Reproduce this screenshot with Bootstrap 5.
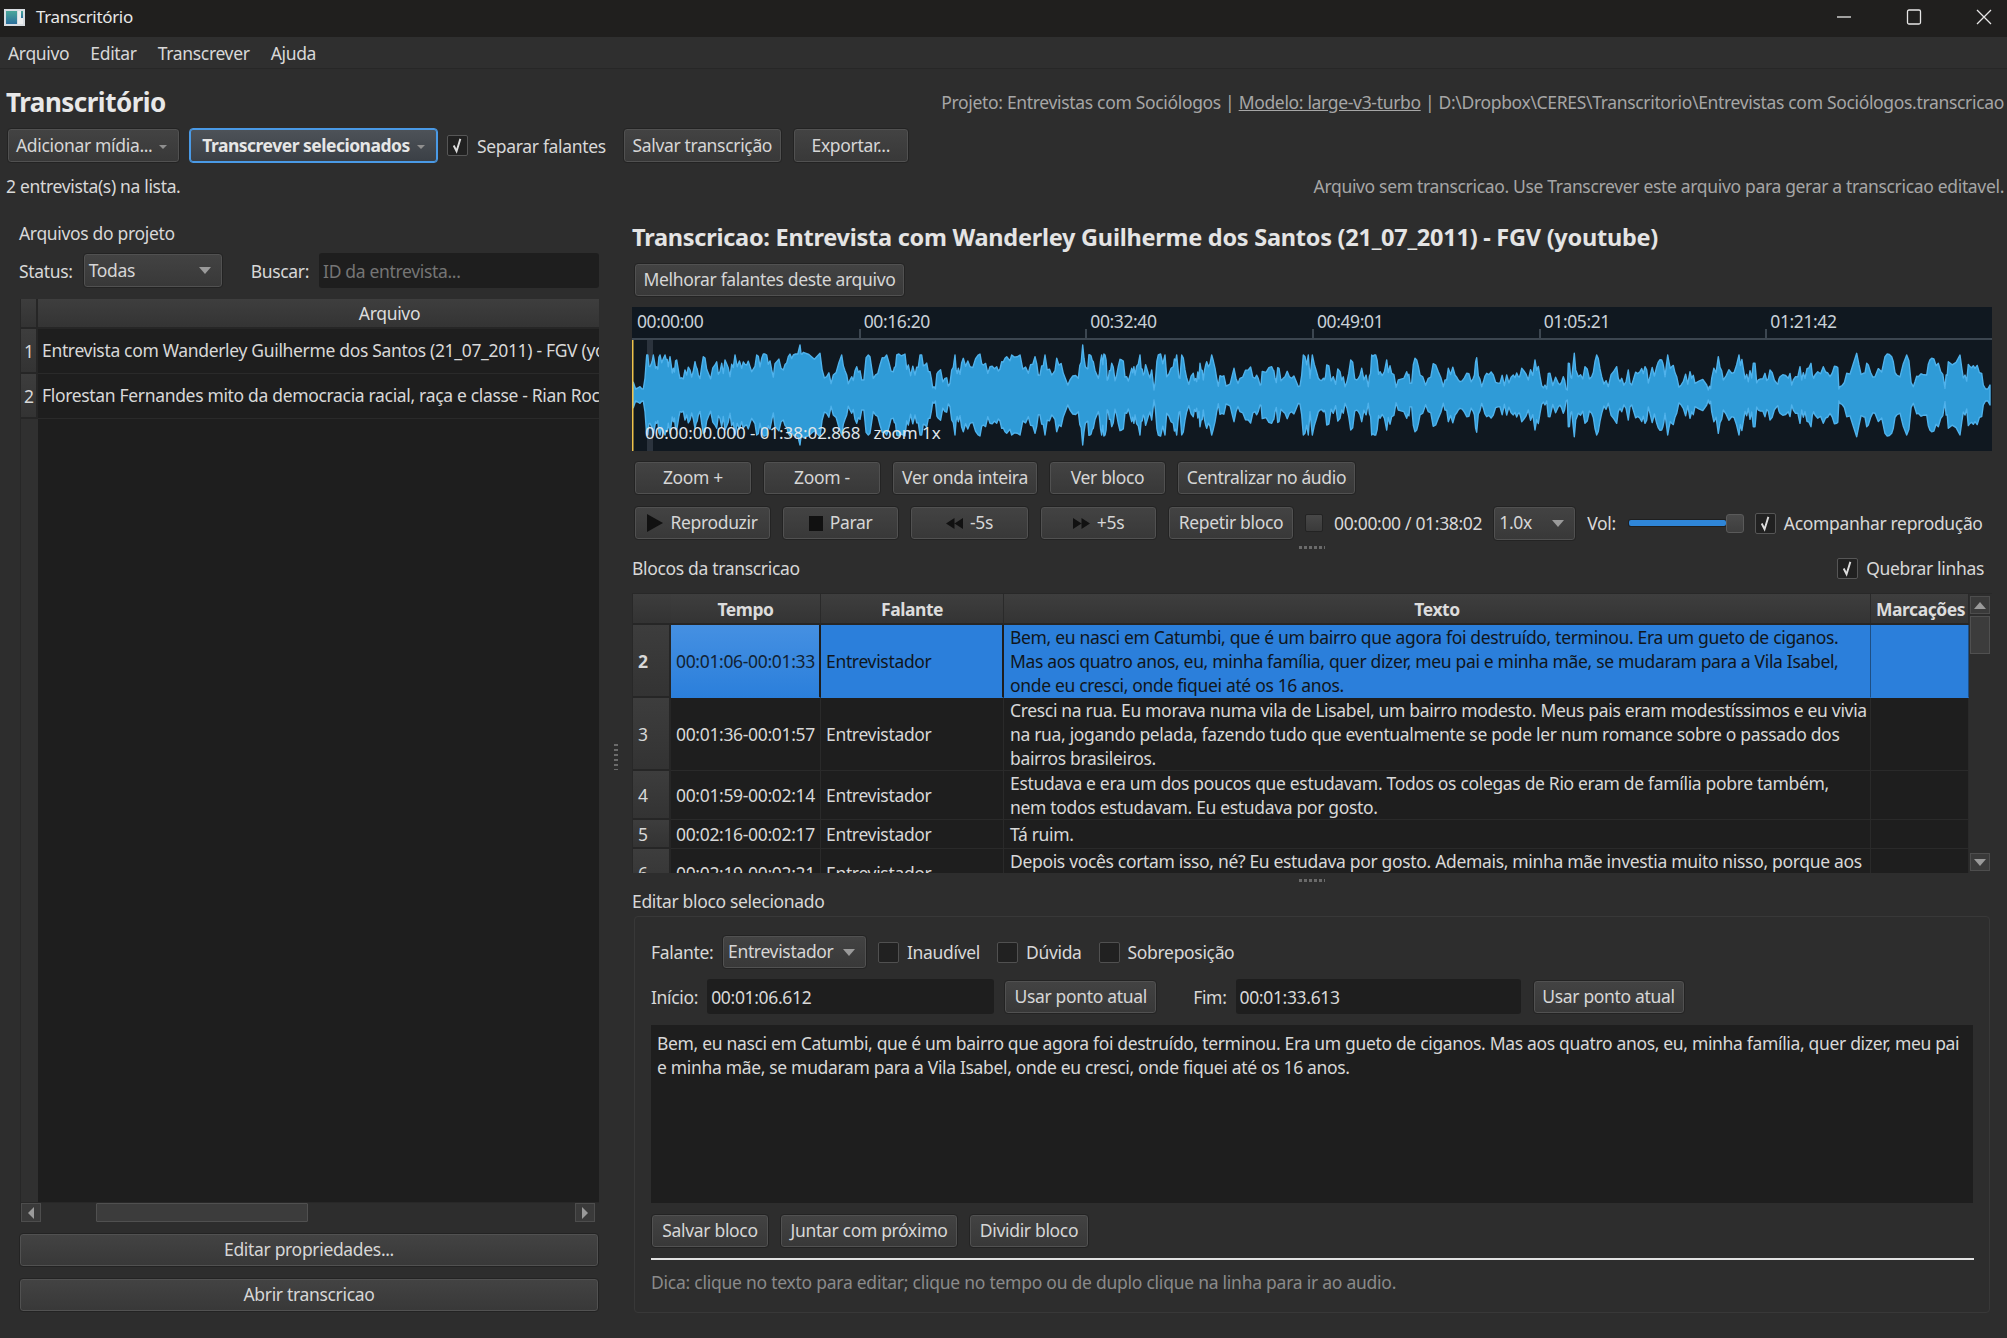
<!DOCTYPE html>
<html lang="pt-BR">
<head>
<meta charset="utf-8">
<title>Transcritório</title>
<link href="https://cdn.jsdelivr.net/npm/bootstrap@5.3.0/dist/css/bootstrap.min.css" rel="stylesheet">
<style>
html,body{margin:0;background:#2d2d2d}
body{font-family:"Noto Sans","Open Sans",sans-serif;font-size:17.5px;line-height:24px;color:#d8d8d8;letter-spacing:-.33px;overflow:hidden}
.app{width:2007px;height:1338px}
.tbar{height:37px;background:#201f1e;color:#e8e8e8;font-size:17px;padding:0 0 3px 4px}
.tbar-name{margin-left:11px}
.wbtn{stroke:#e6e6e6;fill:none;stroke-width:1.3}
.wctl{margin-left:auto;padding-right:15px;gap:54px}
.mbar{height:32px;background:#2f2f2f;border-bottom:1px solid #272727;padding-left:8px;gap:21px}
.mainp{padding:0 3px 25px 6px;min-height:0}
.headrow{margin-top:11px;height:44px;margin-bottom:4px}
.apptitle{font-size:26px;font-weight:700;color:#e8e8e8;letter-spacing:-.5px;margin:0;line-height:32px}
.muted{color:#a6a6a6}
.muted a{color:#a6a6a6}
.toolrow{height:35px;padding-left:1px}
.sep1{margin-left:8px}.sep2{margin-left:2px}
.statrow{height:30px;margin-top:8px}
.qbtn{height:34px;padding:0;border:1px solid #232323;border-radius:4px;box-shadow:inset 0 0 0 1px #515151;background:linear-gradient(#434343,#383838);color:#d6d6d6;font-size:17.5px;letter-spacing:-.33px;line-height:1;white-space:nowrap}
.qbtn:hover{background:linear-gradient(#434343,#383838);color:#d6d6d6;border-color:#232323}
.qbtn.tall{height:35px}
.qbtn.pri{font-weight:700;border-color:#4a9ae6;box-shadow:inset 0 0 0 1px #4a9ae6;background:linear-gradient(#4e5359,#3a3f45);color:#e6e6e6;letter-spacing:-.5px}
.qbtn.dropdown-toggle::after{border-top:.26em solid #8f8f8f;border-left:.26em solid transparent;border-right:.26em solid transparent;border-bottom:0;margin-left:7px;vertical-align:.14em}
.qbtn.combo{display:flex;align-items:center;justify-content:space-between;padding:0 11px 0 5px}
.qbtn.combo::after{margin-left:0;border-top-width:.4em;border-left-width:.36em;border-right-width:.36em;border-top-color:#9a9a9a}
.w173{width:173px}.w249{width:249px}.w159{width:159px}.w116{width:116px}.w271{width:271px}
.w118{width:118px}.w146{width:146px}.w117{width:117px}.w179{width:179px}.w137{width:137px}.w119{width:119px}.w126{width:126px}.w83{width:83px}
.w140{width:140px}.w145{width:145px}.w153{width:153px}.w152{width:152px}.w178{width:178px}.w120{width:120px}
.gap8{gap:8px}.gap9{gap:9px}.gap11{gap:11px}
.form-check-input.qchk{width:21px;height:21px;margin:0;flex:none;border:1px solid #505050;border-radius:2px;background-color:#212121;box-shadow:none}
.form-check-input.qchk.sm{width:18px;height:18px;background:linear-gradient(#484848,#3a3a3a);border-color:#232323}
.form-check-input.qchk:checked{background-color:#212121;border-color:#565656;background-size:100%;background-image:url("data:image/svg+xml,%3csvg xmlns='http://www.w3.org/2000/svg' viewBox='0 0 20 20'%3e%3cpath fill='none' stroke='%23dcdcdc' stroke-width='2' d='M6 10l3 6 4-13'/%3e%3c/svg%3e")}
.form-check-input.qchk.ml11{margin-left:11px}
.form-check-input.qchk.ml17{margin-left:17px}
.lbl-tight{margin-left:-3px}
.leftp{width:580px;margin-left:13px;min-height:0;padding-bottom:1px}
.lbl1{margin-top:20px}
.frow{margin-top:8px;height:35px}
.qinput{height:35px;background:#1e1e1e;border:0;border-radius:3px;color:#d8d8d8;font-size:17.5px;letter-spacing:-.33px;padding:0 4px;box-shadow:none}
.qinput::placeholder{color:#757575;opacity:1}
.qinput:focus{background:#1e1e1e;color:#d8d8d8;box-shadow:none}
.ml28{margin-left:28px}.ml10{margin-left:10px}
.ltbl{margin:11px 0 0 1px;border-left:1px solid #272727;min-height:0}
.lview{overflow:hidden;background:linear-gradient(90deg,#303030 17px,#1e1e1e 17px);min-height:0}
.qtb{table-layout:fixed;border-collapse:separate;border-spacing:0;margin:0;color:#d8d8d8;--bs-table-bg:transparent;--bs-table-color:#d8d8d8;--bs-table-border-color:#2a2a2a}
.qtb.t-l{width:721px}
.qtb.t-l col.c0{width:17px}.qtb.t-l col.c1{width:704px}
.qtb th,.qtb td{padding:0 5px;vertical-align:middle;border:0;box-shadow:none!important}
.qtb thead th{height:30px;background:linear-gradient(#3e3e3e,#343434);border-right:1px solid #2a2a2a;border-bottom:2px solid #262626;text-align:center;font-weight:400;color:#dcdcdc}
.qtb.t-r thead th{font-weight:700;letter-spacing:-.45px;height:31px}
.qtb .rh{background:linear-gradient(#3d3d3d,#333);border-right:2px solid #262626;border-bottom:2px solid #262626;color:#d8d8d8;font-weight:400;padding:0 0 0 5px}
.qtb.t-r thead th.rh{border-right:0}
.qtb .rh.rowb{font-weight:700}
.qtb td{background:#1e1e1e;border-bottom:1px solid #2a2a2a;border-right:1px solid #2a2a2a;white-space:nowrap}
.qtb.t-l td{height:45px;padding:0 0 2px 4px}
.qtb.t-l .rh{padding-left:3px}
.hscroll{height:20px;background:#2d2d2d;border-top:1px solid #282828}
.harr{width:20px;height:19px;background:#3a3a3a;border:1px solid #4d4d4d}
.hthumb{width:212px;height:19px;background:#3c3c3c;border:1px solid #505050;border-radius:1px;margin-left:55px}
.btn-l{margin-top:11px}
.vsplit{width:33px}
.vdots{width:4px;height:26px;background:repeating-linear-gradient(#6a6a6a 0 2px,transparent 2px 5px)}
.rightp{width:1360px;min-height:0}
.rhead{margin:21px 0 0;height:32px;font-size:23.5px;line-height:30px;font-weight:700;color:#e4e4e4;letter-spacing:-.25px}
.ind2{margin-left:2px}
.melh{margin-top:9px}
.wave{height:144px;margin-top:10px;background:#101820;position:relative;overflow:hidden}
.ruler{display:grid;grid-template-columns:repeat(6,1fr);height:33px;border-bottom:2px solid #3c4650}
.tickc{position:relative;padding:2px 0 0 5px;color:#c9d1d8;font-size:17.5px;letter-spacing:-.4px}
.tickc::before{content:"";position:absolute;left:0;bottom:0;width:2px;height:9px;background:#3c4650}
.tickc:first-child::before{display:none}
.wsvg{display:block}
.wover{position:absolute;left:13px;bottom:6px;color:#dfe5ea;font-size:17px;letter-spacing:-.05px;white-space:pre}
.row1{margin-top:10px}.row2{margin-top:11px;height:34px}
.hsplit{height:3px;width:26px;margin:6px auto 0;background:repeating-linear-gradient(90deg,#6a6a6a 0 3px,transparent 3px 5px)}
.blrow{height:32px;margin-top:3px}
.sld{width:115px;margin-left:2px;height:19px}
.sld-fill{height:6px;background:#2f86d8;border-radius:2px;box-shadow:0 0 0 1px #1f1f1f}
.sld-knob{width:18px;height:19px;background:linear-gradient(#4a4a4a,#3e3e3e);border:1px solid #5a5a5a;border-radius:3px}
.rtblw{height:280px;margin-top:9px;background:#2d2d2d;border:1px solid #282828;border-width:1px 0 0 1px}
.rview{overflow:hidden;width:1336px;flex:none}
.t-r{width:1336px}
.t-r col.c0{width:38px}.t-r col.c1{width:150px}.t-r col.c2{width:183px}.t-r col.c3{width:867px}.t-r col.c4{width:98px}
.t-r .selr td{background:#2b7fdb;color:#10161c;border-bottom-color:#2b7fdb;border-right-color:#1e4f85}
.t-r .selr td.first{background:linear-gradient(#4590e2,#2b7fdb);color:#123;border-right:2px solid #1e1e1e}
.t-r .selr td.sec{border-right:2px solid #1e1e1e}
.t-r td.tx{padding-left:6px}
.t-r .shortr td,.t-r .shortr th{height:29px}
.vscroll{width:22px;padding:2px 2px 2px 1px;background:#2d2d2d}
.varr{height:18px;background:#3a3a3a;border:1px solid #4d4d4d}
.vthumb{height:38px;margin-top:2px;background:#3c3c3c;border:1px solid #505050}
.edlbl{margin-top:8px;height:24px;line-height:22px}
.grpb{margin:2px 0 0 2px;width:1356px;height:397px;border:1px solid #383838;border-radius:4px;padding:18px 16px 0 16px}
.e1{height:34px;line-height:22px}
.e2{height:35px;margin-top:10px}
.etx{width:1322px;height:178px;margin-top:11px;background:#1e1e1e;border:0;border-radius:0;padding:6px 6px;color:#d8d8d8;font:inherit;letter-spacing:inherit;line-height:24px;resize:none;white-space:pre;overflow:hidden;display:block;box-shadow:none}
.etx:focus{background:#1e1e1e;color:#d8d8d8;box-shadow:none}
.e3{margin-top:11px}
.eline{height:2px;width:1323px;background:#e2e2e2;margin:10px 0 0;opacity:1;border:0}
.dica{margin-top:10px;color:#8a8a8a;letter-spacing:-.25px}
.i287{width:287px}.i285{width:285px}
.ml8{margin-left:8px}.ml9{margin-left:9px}.ml11{margin-left:11px}.ml12{margin-left:12px}.ml36{margin-left:36px}
.lb60{width:60px}
.lefty{text-align:left;padding-left:8px}
svg.ic{flex:none;margin-right:7px}
.inl{display:inline-flex;align-items:center;justify-content:center}
</style>
</head>
<body>
<div class="app d-flex flex-column">
  <div class="tbar d-flex align-items-center flex-shrink-0">
    <svg width="21" height="17" viewBox="0 0 21 17"><defs><linearGradient id="ig" x1="0" y1="0" x2="0" y2="1"><stop offset="0" stop-color="#4aa79a"/><stop offset="1" stop-color="#2c6f9c"/></linearGradient></defs><rect width="21" height="17" fill="#d8dde2"/><rect x="2" y="2" width="11" height="13" fill="url(#ig)"/><rect x="14" y="2" width="5" height="13" fill="#eceeef"/><rect x="17" y="2" width="2" height="7" fill="url(#ig)"/></svg>
    <span class="tbar-name">Transcritório</span>
    <div class="wctl d-flex align-items-center">
      <svg width="16" height="16" viewBox="0 0 16 16"><path class="wbtn" d="M1 8h14"/></svg>
      <svg width="16" height="16" viewBox="0 0 16 16"><rect class="wbtn" x="1.500" y="1" width="13" height="14" rx="1.500"/></svg>
      <svg width="16" height="16" viewBox="0 0 16 16"><path class="wbtn" d="M1 1l14 14M15 1L1 15"/></svg>
    </div>
  </div>
  <div class="mbar d-flex align-items-center flex-shrink-0"><span>Arquivo</span><span>Editar</span><span>Transcrever</span><span>Ajuda</span></div>

  <div class="mainp d-flex flex-column flex-grow-1">
    <div class="headrow d-flex align-items-center justify-content-between flex-shrink-0">
      <h1 class="apptitle">Transcritório</h1>
      <div class="muted">Projeto: Entrevistas com Sociólogos | <a href="#">Modelo: large-v3-turbo</a> | D:\Dropbox\CERES\Transcritorio\Entrevistas com Sociólogos.transcricao</div>
    </div>
    <div class="toolrow d-flex align-items-center gap9 flex-shrink-0">
      <button class="btn qbtn tall w173 lefty dropdown-toggle">Adicionar mídia...</button>
      <button class="btn qbtn tall pri w249 dropdown-toggle">Transcrever selecionados</button>
      <input class="form-check-input qchk" type="checkbox" checked>
      <span>Separar falantes</span>
      <button class="btn qbtn tall w159 sep1">Salvar transcrição</button>
      <button class="btn qbtn tall w116 sep2">Exportar...</button>
    </div>
    <div class="statrow d-flex align-items-center justify-content-between flex-shrink-0">
      <span>2 entrevista(s) na lista.</span>
      <span class="muted">Arquivo sem transcricao. Use Transcrever este arquivo para gerar a transcricao editavel.</span>
    </div>

    <div class="d-flex flex-grow-1" id="panes">
      <div class="leftp d-flex flex-column">
        <div class="lbl1">Arquivos do projeto</div>
        <div class="frow d-flex align-items-center">
          <span>Status:</span>
          <button class="btn qbtn tall combo dropdown-toggle w140 ml10">Todas</button>
          <span class="ml28">Buscar:</span>
          <input class="form-control qinput flex-grow-1 w-auto ml10" placeholder="ID da entrevista...">
        </div>
        <div class="ltbl d-flex flex-column flex-grow-1">
          <div class="lview flex-grow-1">
            <table class="table qtb t-l">
              <colgroup><col class="c0"><col class="c1"></colgroup>
              <thead><tr><th class="rh"></th><th>Arquivo</th></tr></thead>
              <tbody>
                <tr><th class="rh">1</th><td>Entrevista com Wanderley Guilherme dos Santos (21_07_2011) - FGV (youtube)</td></tr>
                <tr><th class="rh">2</th><td>Florestan Fernandes mito da democracia racial, raça e classe - Rian Rocha</td></tr>
              </tbody>
            </table>
          </div>
          <div class="hscroll d-flex">
            <div class="harr inl"><svg width="10" height="14" viewBox="0 0 10 14"><path d="M8 1v12L2 7z" fill="#9a9a9a"/></svg></div>
            <div class="hthumb"></div>
            <div class="harr inl ms-auto me-1"><svg width="10" height="14" viewBox="0 0 10 14"><path d="M2 1v12l6-6z" fill="#9a9a9a"/></svg></div>
          </div>
        </div>
        <button class="btn qbtn w-100 btn-l">Editar propriedades...</button>
        <button class="btn qbtn w-100 btn-l">Abrir transcricao</button>
      </div>

      <div class="vsplit d-flex align-items-center justify-content-center"><div class="vdots"></div></div>

      <div class="rightp d-flex flex-column">
        <h2 class="rhead">Transcricao: Entrevista com Wanderley Guilherme dos Santos (21_07_2011) - FGV (youtube)</h2>
        <div class="melh ind2"><button class="btn qbtn w271">Melhorar falantes deste arquivo</button></div>
        <div class="wave">
          <div class="ruler">
            <div class="tickc">00:00:00</div><div class="tickc">00:16:20</div><div class="tickc">00:32:40</div><div class="tickc">00:49:01</div><div class="tickc">01:05:21</div><div class="tickc">01:21:42</div>
          </div>
          <svg class="wsvg" id="wv" width="1360" height="111" viewBox="632 340 1360 111"></svg>
          <div class="wover">00:00:00.000 - 01:38:02.868   zoom 1x</div>
        </div>
        <div class="row1 ind2 d-flex gap11">
          <button class="btn qbtn w118">Zoom +</button><button class="btn qbtn w118">Zoom -</button><button class="btn qbtn w146">Ver onda inteira</button><button class="btn qbtn w117">Ver bloco</button><button class="btn qbtn w179">Centralizar no áudio</button>
        </div>
        <div class="row2 ind2 d-flex align-items-center gap11">
          <button class="btn qbtn w137 inl"><svg class="ic" width="16" height="18" viewBox="0 0 16 18"><path d="M0 0l16 9L0 18z" fill="#111"/></svg>Reproduzir</button>
          <button class="btn qbtn w117 inl"><svg class="ic" width="14" height="15" viewBox="0 0 14 15"><rect width="14" height="15" fill="#111"/></svg>Parar</button>
          <button class="btn qbtn w119 inl"><svg class="ic" width="17" height="11" viewBox="0 0 17 11"><path d="M8.500 0v11L0 5.500zM17 0v11L8.500 5.500z" fill="#111"/></svg>-5s</button>
          <button class="btn qbtn w117 inl"><svg class="ic" width="17" height="11" viewBox="0 0 17 11"><path d="M0 0v11l8.500-5.500zM8.500 0v11L17 5.500z" fill="#111"/></svg>+5s</button>
          <button class="btn qbtn w126">Repetir bloco</button>
          <input class="form-check-input qchk sm" type="checkbox">
          <span>00:00:00 / 01:38:02</span>
          <button class="btn qbtn combo tall dropdown-toggle w83">1.0x</button>
          <span>Vol:</span>
          <div class="sld d-flex align-items-center"><div class="sld-fill flex-grow-1"></div><div class="sld-knob"></div></div>
          <input class="form-check-input qchk" type="checkbox" checked>
          <span class="lbl-tight">Acompanhar reprodução</span>
        </div>
        <div class="hsplit"></div>
        <div class="blrow d-flex align-items-center justify-content-between">
          <span>Blocos da transcricao</span>
          <div class="d-flex align-items-center gap8 pe-2"><input class="form-check-input qchk" type="checkbox" checked><span>Quebrar linhas</span></div>
        </div>
        <div class="rtblw d-flex">
          <div class="rview">
            <table class="table qtb t-r">
              <colgroup><col class="c0"><col class="c1"><col class="c2"><col class="c3"><col class="c4"></colgroup>
              <thead><tr><th class="rh"></th><th>Tempo</th><th>Falante</th><th>Texto</th><th>Marcações</th></tr></thead>
              <tbody>
                <tr class="selr"><th class="rh rowb">2</th><td class="first">00:01:06-00:01:33</td><td class="sec">Entrevistador</td><td class="tx">Bem, eu nasci em Catumbi, que é um bairro que agora foi destruído, terminou. Era um gueto de ciganos.<br>Mas aos quatro anos, eu, minha família, quer dizer, meu pai e minha mãe, se mudaram para a Vila Isabel,<br>onde eu cresci, onde fiquei até os 16 anos.</td><td></td></tr>
                <tr><th class="rh">3</th><td>00:01:36-00:01:57</td><td>Entrevistador</td><td class="tx">Cresci na rua. Eu morava numa vila de Lisabel, um bairro modesto. Meus pais eram modestíssimos e eu vivia<br>na rua, jogando pelada, fazendo tudo que eventualmente se pode ler num romance sobre o passado dos<br>bairros brasileiros.</td><td></td></tr>
                <tr><th class="rh">4</th><td>00:01:59-00:02:14</td><td>Entrevistador</td><td class="tx">Estudava e era um dos poucos que estudavam. Todos os colegas de Rio eram de família pobre também,<br>nem todos estudavam. Eu estudava por gosto.</td><td></td></tr>
                <tr class="shortr"><th class="rh">5</th><td>00:02:16-00:02:17</td><td>Entrevistador</td><td class="tx">Tá ruim.</td><td></td></tr>
                <tr><th class="rh">6</th><td>00:02:19-00:02:21</td><td>Entrevistador</td><td class="tx">Depois vocês cortam isso, né? Eu estudava por gosto. Ademais, minha mãe investia muito nisso, porque aos<br>&nbsp;</td><td></td></tr>
              </tbody>
            </table>
          </div>
          <div class="vscroll d-flex flex-column flex-grow-1">
            <div class="varr inl"><svg width="14" height="9" viewBox="0 0 14 9"><path d="M7 1l6 7H1z" fill="#9a9a9a"/></svg></div>
            <div class="vthumb"></div>
            <div class="varr inl mt-auto"><svg width="14" height="9" viewBox="0 0 14 9"><path d="M1 1h12L7 8z" fill="#9a9a9a"/></svg></div>
          </div>
        </div>
        <div class="hsplit"></div>
        <div class="edlbl">Editar bloco selecionado</div>
        <div class="grpb">
          <div class="e1 d-flex align-items-center">
            <span class="lb60">Falante:</span>
            <button class="btn qbtn combo dropdown-toggle w145 ml11">Entrevistador</button>
            <input class="form-check-input qchk ml11" type="checkbox"><span class="ml8">Inaudível</span>
            <input class="form-check-input qchk ml17" type="checkbox"><span class="ml8">Dúvida</span>
            <input class="form-check-input qchk ml17" type="checkbox"><span class="ml8">Sobreposição</span>
          </div>
          <div class="e2 d-flex align-items-center">
            <span>Início:</span>
            <input class="form-control qinput i287 ml9" value="00:01:06.612">
            <button class="btn qbtn w153 ml10">Usar ponto atual</button>
            <span class="ml36">Fim:</span>
            <input class="form-control qinput i285 ml9" value="00:01:33.613">
            <button class="btn qbtn w152 ml12">Usar ponto atual</button>
          </div>
          <textarea class="form-control etx" wrap="off">Bem, eu nasci em Catumbi, que é um bairro que agora foi destruído, terminou. Era um gueto de ciganos. Mas aos quatro anos, eu, minha família, quer dizer, meu pai
e minha mãe, se mudaram para a Vila Isabel, onde eu cresci, onde fiquei até os 16 anos.</textarea>
          <div class="e3 d-flex gap11">
            <button class="btn qbtn w118">Salvar bloco</button><button class="btn qbtn w178">Juntar com próximo</button><button class="btn qbtn w120">Dividir bloco</button>
          </div>
          <hr class="eline">
          <div class="dica">Dica: clique no texto para editar; clique no tempo ou de duplo clique na linha para ir ao audio.</div>
        </div>
      </div>
    </div>
  </div>
</div>
<script src="https://cdn.jsdelivr.net/npm/bootstrap@5.3.0/dist/js/bootstrap.bundle.min.js"></script>
<script>
(function(){
var segs=[
[630,"10:142,30:155,45:130,50:60,60:95,70:60,80:95,90:60,105:60,115:95,120:65,130:100,140:75,150:130,165:105,180:105,195:80,205:120,220:65,235:115,255:90,270:110,285:75,300:125,315:60,335:100,350:90,365:110,380:60,395:70,410:60,425:105,440:80,460:105,475:65,490:60,510:30,520:52,570:55,590:125,610:120,635:60,650:120,665:125,680:95,695:135,715:60,730:130,750:90,770:60,790:110,800:60,820:60,835:90,855:120,870:60,885:90,900:110,912:155,925:110,945:130,960:145,975:60,985:100,1000:70,1020:95,1045:60,1060:90,1080:95,1100:95,1115:80,1130:65,1145:60,1170:60,1195:115,1215:65,1230:120,1245:60,1265:120,1280:70,1300:115,1320:135,1345:130,1358:30,1370:100"],
[1085,"15:60,25:80,40:130,50:60,60:60,70:130,80:85,95:120,110:75,125:125,140:100,150:120,165:60,175:120,185:100,200:105,207:165,220:60,240:60,245:125,265:95,275:60,285:130,290:60,305:130,325:115,335:140,345:85,355:135,365:80,380:60,395:130,410:125,430:150,447:100,465:130,490:105,510:130,525:150,535:110,560:95,570:130,582:100,600:125,620:130,640:155,655:60,670:60,675:130,682:60,700:130,715:130,725:90,745:125,765:110,780:155,797:75,815:135,830:100,850:155,860:60,872:60,885:110,905:75,920:115,940:135,965:110,975:145,990:70,1005:120,1030:130,1052:90,1075:155,1090:100,1110:120,1125:140,1145:115,1165:130,1175:68,1190:155,1205:115,1225:120,1245:145,1265:120,1285:120,1300:125,1310:100,1330:135,1350:75,1365:125,1380:150"],
[1535,"30:150,45:115,70:145,85:125,97:165,100:85,110:130,118:55,130:125,150:95,170:125,185:60,200:125,220:155,245:95,260:130,280:105,295:135,315:110,330:95,345:125,365:95,380:75,390:125,398:60,410:95,425:125,445:140,465:110,480:145,515:150,520:165,530:130,550:65,565:135,590:115,612:60,625:100,640:140,655:85,670:135,690:115,705:105,725:145,735:125,760:130,775:135,795:95,810:130,828:85,840:120,865:95,885:125,905:95,915:155,935:115,965:55,985:115,1000:90,1020:125,1050:65,1070:65,1085:120,1115:60,1135:155,1150:125,1175:120,1190:70,1210:85,1230:160,1240:80,1275:60,1290:120,1305:95,1320:100,1340:115,1345:150,1365:150"]];
var raw=[];
segs.forEach(function(s){s[1].split(",").forEach(function(p){var a=p.split(":");raw.push([s[0]+(+a[0])/3,(180-(+a[1]))/3]);});});
var seed=11;function rnd(){seed=(seed*16807)%2147483647;return seed/2147483647;}
var pts=[];
raw.forEach(function(p,i){pts.push(p);var q=raw[i+1];if(!q)return;var dx=q[0]-p[0];
  if(dx>=3){for(var k=1;k<3;k++){var t=k/3;var m=p[1]+(q[1]-p[1])*t;pts.push([p[0]+dx*t,Math.max(6,Math.min(41,m+(rnd()-.62)*16))]);}}
});
var top=pts.map(function(p){return p[0].toFixed(1)+" "+(395-p[1]).toFixed(1);});
var bot=pts.slice().reverse().map(function(p){return p[0].toFixed(1)+" "+(395+p[1]).toFixed(1);});
var first=pts[0];
var d="M633 "+(395-first[1]).toFixed(1)+"L"+top.join("L")+"L"+bot.join("L")+"L633 "+(395+first[1]).toFixed(1)+"Z";
document.getElementById("wv").innerHTML='<rect x="647" y="340" width="6" height="111" fill="#2b333d"/><path d="'+d+'" fill="#2f9bd7" stroke="#4fb2ec" stroke-width="1.400" stroke-linejoin="round"/><rect x="632" y="340" width="1.500" height="111" fill="#eec24a"/>';
})();
</script>
</body>
</html>
